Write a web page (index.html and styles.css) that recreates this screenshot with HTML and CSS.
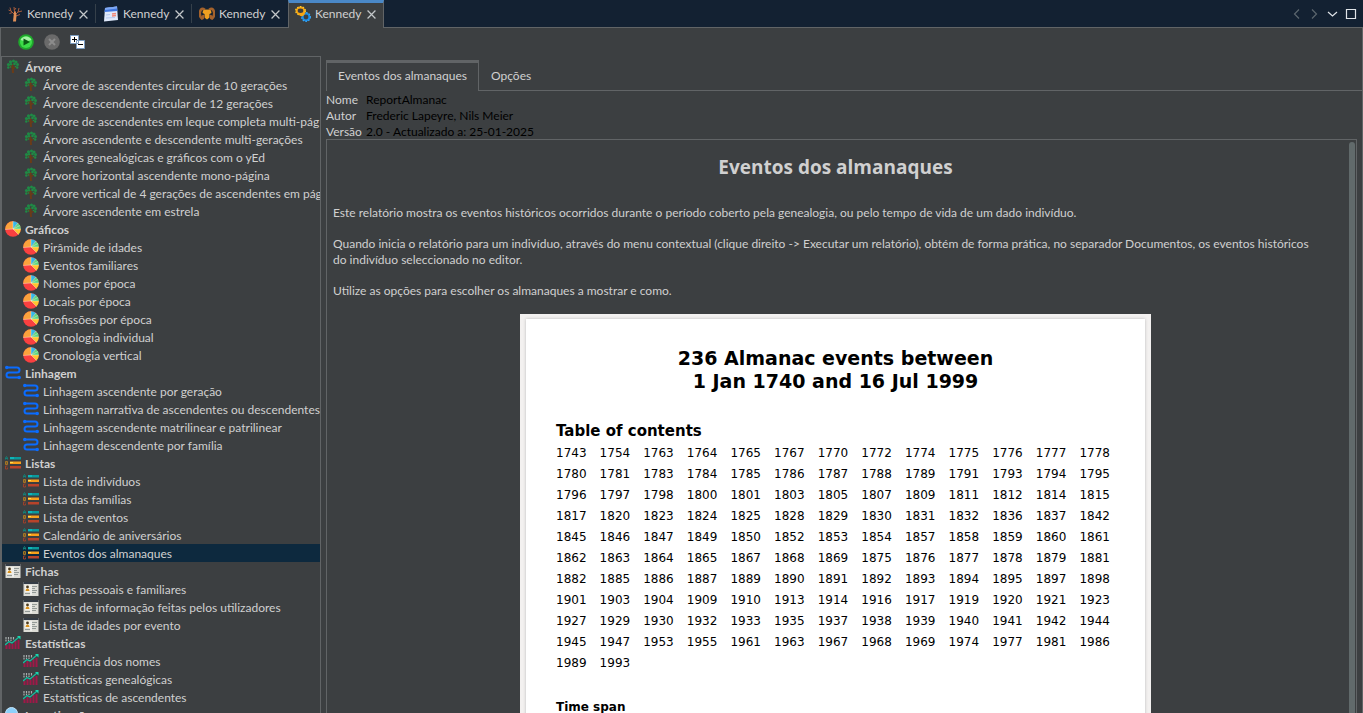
FILE: index.html
```html
<!DOCTYPE html>
<html lang="pt">
<head>
  <meta charset="UTF-8" />
  <meta name="viewport" content="width=device-width, initial-scale=1.0" />
  <title>Kennedy - Relatórios</title>
  <link rel="stylesheet" href="styles.css">
</head>
<body>

  <!-- Iconos reutilizados -->
  <svg class="sprite" aria-hidden="true">
    <symbol id="i-arvore" viewBox="0 0 16 16">
      <path d="M7.500 5 L8 14" stroke="#6a3c18" stroke-width="2" />
      <path d="M4.500 6.500 L7.500 9 M11.500 7 L8 10" stroke="#6a3c18" stroke-width="1.200" fill="none" />
      <g fill="#1f8a45">
        <circle cx="3.500" cy="5.500" r="1.600" /><circle cx="5.500" cy="2.800" r="1.600" />
        <circle cx="8.500" cy="2" r="1.500" /><circle cx="11" cy="3" r="1.600" />
        <circle cx="12.500" cy="5.500" r="1.500" /><circle cx="6" cy="5.200" r="1.200" />
        <circle cx="9.500" cy="5" r="1.300" /><circle cx="12.200" cy="8.500" r="1.200" />
        <circle cx="3.300" cy="8.500" r="1.200" /><circle cx="5.500" cy="8" r=".8" />
        <circle cx="10.500" cy="7.500" r=".8" />
      </g>
    </symbol>
    <symbol id="i-grafico" viewBox="0 0 16 16">
      <circle cx="8" cy="8" r="7.8" fill="#fa4040" />
      <path d="M8 8 L8 .2 A7.8 7.8 0 0 0 .2 8.500 Z" fill="#fba23c" />
      <path d="M8 8 L8 .2 A7.8 7.8 0 0 1 13 2 Z" fill="#35b8e8" />
      <path d="M8 8 L13 2 A7.8 7.8 0 0 1 15.800 8 Z" fill="#5cd480" />
      <path d="M8 8 L15.800 8 A7.800 7.800 0 0 1 13.500 13.500 Z" fill="#ffc62e" />
      <path d="M8 .2 V8 L.2 8.500 M8 8 L13 2 M8 8 H15.800 M8 8 L13.500 13.500 M8 8 L15 4.500" stroke="#fff" stroke-width=".5" stroke-opacity=".7" fill="none" />
    </symbol>
    <symbol id="i-linhagem" viewBox="0 0 16 16">
      <path d="M2 2.500 H12 Q14.500 2.500 14.500 5 T12 7.500 H4 Q1.500 7.500 1.500 10 T4 12.500 H14" fill="none" stroke="#0a6cff" stroke-width="2" />
      <circle cx="1.800" cy="2.500" r="1.800" fill="#0a6cff" />
      <circle cx="14.200" cy="12.500" r="1.800" fill="#0a6cff" />
    </symbol>
    <symbol id="i-lista" viewBox="0 0 16 16">
      <rect x="5" y="2" width="11" height="2.500" fill="#0b9a9c" />
      <rect x="5" y="6.500" width="11" height="2.500" fill="#f9a01b" />
      <rect x="5" y="11" width="11" height="2.500" fill="#b8432a" />
      <path d="M5 3 h4" stroke="#12d0d8" />
      <path d="M5 7.500 h3" stroke="#ffdc4c" />
      <path d="M.5 4.500 V3 L1.500 1.500 L2.500 3 V4.500 M.5 3.500 H2.500" fill="none" stroke="#138078" />
      <path d="M.5 6.500 h2 v3 h-2 z M.5 8 h2" fill="none" stroke="#b07c20" stroke-width=".9" />
      <path d="M2.500 11 h-2 v3 h2 v-1.500" fill="none" stroke="#9c402a" />
    </symbol>
    <symbol id="i-ficha" viewBox="0 0 16 16">
      <rect x=".5" y="1" width="15" height="14" fill="#dcdcd6" />
      <rect x=".5" y="1" width="15" height="2" fill="#343c46" />
      <rect x="2" y="4" width="5" height="7" fill="#f4f0e4" />
      <circle cx="4.500" cy="6" r="1.400" fill="#4a3a20" />
      <path d="M2.500 10 Q2.500 7.500 4.500 7.500 T6.500 10 Z" fill="#d8901c" />
      <path d="M2 12.500 H7 M9 5.500 H14 M9 7.500 H12 M9 9.500 H14 M9 11.500 H13" stroke="#8a9290" stroke-width=".9" />
      <path d="M8 4 V14" stroke="#fff" />
    </symbol>
    <symbol id="i-estatistica" viewBox="0 0 16 16">
      <path d="M1.500 14 V10 M4.500 14 V8 M7.500 14 V9 M10.500 14 V6 M13.500 14 V5" stroke="#a01848" stroke-width="2" />
      <path d="M1 2 V7 M3.500 2 V6 M6 2 V6 M8.500 2 V5" stroke="#a8aeae" stroke-width="1.200" stroke-dasharray="2 .5" />
      <path d="M0 10 L4 6.500 L7 8 L14 2" fill="none" stroke="#18b89c" stroke-width="1.400" />
      <path d="M12 1 H15.500 V4.500 Z" fill="#18d8b0" />
    </symbol>
    <symbol id="i-pesquisa" viewBox="0 0 16 16">
      <circle cx="6.500" cy="6.500" r="6" fill="#8ed0fa" stroke="#c4e4fa" />
      <path d="M11 11 L15 15" stroke="#c49040" stroke-width="2" />
    </symbol>
    <symbol id="i-fechar" viewBox="0 0 8 8">
      <path d="M.5 .5 L7.500 7.500 M7.500 .5 L.5 7.500" stroke="#c4c8ca" stroke-width="1.100" />
    </symbol>
  </svg>

  <header class="janelas">
    <nav class="abas">
      <div class="aba">
        <svg class="icone" viewBox="0 0 16 16">
          <path d="M7 8 L4 5 L3 1.500 M4 5 L1.500 4 M8 9 L11 6 L12 2 M11 6 L15 5 M9 10 L13 8.500 M7.500 6 L7 1 M7.500 4 L9 2 M5.500 6.500 L2.500 7.500" fill="none" stroke="#a85c3c" />
          <path d="M6 15.500 L7 6 L8.500 5 L9.500 9 L9 15.500 Z" fill="#e09058" />
        </svg>
        <a href="#">Kennedy</a>
        <button aria-label="Fechar"><svg><use href="#i-fechar" /></svg></button>
      </div>
      <div class="aba">
        <svg class="icone" viewBox="0 0 16 16">
          <path d="M2 2 L14 .5 L15 14 L1 15.500 Z" fill="#dfe9fb" />
          <path d="M2 2 L14 .5 L14.500 5 L1.500 6 Z" fill="#3f76e0" />
          <path d="M2 2 L14 .5 L14 2.500 L2 4 Z" fill="#7ea8f4" />
          <path d="M9 8 L13 7.500 M9 10 L13 9.500" stroke="#f08878" stroke-width="1.500" />
          <path d="M3 9 L7 8.500 M3 12 L12 11.500" stroke="#b4c8f0" />
        </svg>
        <a href="#">Kennedy</a>
        <button aria-label="Fechar"><svg><use href="#i-fechar" /></svg></button>
      </div>
      <div class="aba">
        <svg class="icone" viewBox="0 0 16 16">
          <path d="M6 4 Q2 1 1 6 Q0 10 3 12.500 Q5 12 4 9 M10 4 Q14 1 15 6 Q16 10 13 12.500 Q11 12 12 9" fill="none" stroke="#a4622c" stroke-width="2.600" />
          <path d="M4 4.500 Q8 2.500 12 4.500 L12.500 7 L10.500 8 L10 12 L8 13.500 L6 12 L5.500 8 L3.500 7 Z" fill="#f0a020" />
        </svg>
        <a href="#">Kennedy</a>
        <button aria-label="Fechar"><svg><use href="#i-fechar" /></svg></button>
      </div>
      <div class="aba ativa">
        <svg class="icone" viewBox="0 0 16 16">
          <ellipse cx="5.500" cy="4.800" rx="3.800" ry="3.200" fill="none" stroke="#f8a410" stroke-width="2" />
          <ellipse cx="5.500" cy="4.800" rx="4.900" ry="4.200" fill="none" stroke="#ffcc30" stroke-width="1.200" stroke-dasharray="1.500 1.400" />
          <ellipse cx="11" cy="11" rx="3.400" ry="3.400" fill="none" stroke="#1c8ce4" stroke-width="2" />
          <ellipse cx="11" cy="11" rx="4.400" ry="4.400" fill="none" stroke="#38a8f8" stroke-width="1.200" stroke-dasharray="1.500 1.400" />
          <path d="M4 8 Q8 11 9.500 6" fill="none" stroke="#f8a410" stroke-width="2" />
        </svg>
        <a href="#">Kennedy</a>
        <button aria-label="Fechar"><svg><use href="#i-fechar" /></svg></button>
      </div>
    </nav>
    <div class="controles">
      <button aria-label="Anterior" disabled><svg viewBox="0 0 12 12"><path d="M8 1.500 L3.500 6 L8 10.500" /></svg></button>
      <button aria-label="Seguinte" disabled><svg viewBox="0 0 12 12"><path d="M3 1.500 L7.500 6 L3 10.500" /></svg></button>
      <button aria-label="Lista de janelas"><svg viewBox="0 0 12 12"><path d="M1 4 L5.500 8 L10 4" /></svg></button>
      <button aria-label="Maximizar"><svg viewBox="0 0 12 12"><path d="M1.500 1.500 H10.500 V10.500 H1.500 Z" /></svg></button>
    </div>
  </header>

  <main>
    <div class="ferramentas">
      <button aria-label="Executar">
        <svg viewBox="0 0 16 16">
          <circle cx="8" cy="8" r="7.800" fill="#1fa82c" />
          <circle cx="8" cy="8" r="6" fill="#3cdc48" />
          <path d="M2.500 6 A6 6 0 0 1 13.500 6 Q8 8 2.500 6 Z" fill="#a4f4a4" />
          <path d="M5.500 4.500 L12 8 L5.500 11.500 Z" fill="#0a5c14" />
        </svg>
      </button>
      <button aria-label="Parar" disabled>
        <svg viewBox="0 0 16 16">
          <circle cx="8" cy="8" r="7.800" fill="#6a6a6a" />
          <path d="M5 5 L11 11 M11 5 L5 11" stroke="#8c8c8c" stroke-width="2" />
        </svg>
      </button>
      <button aria-label="Expandir ou recolher">
        <svg viewBox="0 0 16 16">
          <path d="M.5 1.500 H8.500 V9.500 H.5 Z M6.500 6.500 H14.500 V14.500 H6.500 Z" fill="#fff" stroke="#7c9cc0" />
          <path d="M2 5.500 H7 M4.500 3 V8 M8 10.500 H13" stroke="#000" />
        </svg>
      </button>
    </div>

    <div class="divisao">
      <nav class="arvore">
        <h2><svg><use href="#i-arvore" /></svg>Árvore</h2>
        <ul>
          <li><a href="#"><svg><use href="#i-arvore" /></svg>Árvore de ascendentes circular de 10 gerações</a></li>
          <li><a href="#"><svg><use href="#i-arvore" /></svg>Árvore descendente circular de 12 gerações</a></li>
          <li><a href="#"><svg><use href="#i-arvore" /></svg>Árvore de ascendentes em leque completa multi-pág</a></li>
          <li><a href="#"><svg><use href="#i-arvore" /></svg>Árvore ascendente e descendente multi-gerações</a></li>
          <li><a href="#"><svg><use href="#i-arvore" /></svg>Árvores genealógicas e gráficos com o yEd</a></li>
          <li><a href="#"><svg><use href="#i-arvore" /></svg>Árvore horizontal ascendente mono-página</a></li>
          <li><a href="#"><svg><use href="#i-arvore" /></svg>Árvore vertical de 4 gerações de ascendentes em pág</a></li>
          <li><a href="#"><svg><use href="#i-arvore" /></svg>Árvore ascendente em estrela</a></li>
        </ul>
        <h2><svg><use href="#i-grafico" /></svg>Gráficos</h2>
        <ul>
          <li><a href="#"><svg><use href="#i-grafico" /></svg>Pirâmide de idades</a></li>
          <li><a href="#"><svg><use href="#i-grafico" /></svg>Eventos familiares</a></li>
          <li><a href="#"><svg><use href="#i-grafico" /></svg>Nomes por época</a></li>
          <li><a href="#"><svg><use href="#i-grafico" /></svg>Locais por época</a></li>
          <li><a href="#"><svg><use href="#i-grafico" /></svg>Profissões por época</a></li>
          <li><a href="#"><svg><use href="#i-grafico" /></svg>Cronologia individual</a></li>
          <li><a href="#"><svg><use href="#i-grafico" /></svg>Cronologia vertical</a></li>
        </ul>
        <h2><svg><use href="#i-linhagem" /></svg>Linhagem</h2>
        <ul>
          <li><a href="#"><svg><use href="#i-linhagem" /></svg>Linhagem ascendente por geração</a></li>
          <li><a href="#"><svg><use href="#i-linhagem" /></svg>Linhagem narrativa de ascendentes ou descendentes</a></li>
          <li><a href="#"><svg><use href="#i-linhagem" /></svg>Linhagem ascendente matrilinear e patrilinear</a></li>
          <li><a href="#"><svg><use href="#i-linhagem" /></svg>Linhagem descendente por família</a></li>
        </ul>
        <h2><svg><use href="#i-lista" /></svg>Listas</h2>
        <ul>
          <li><a href="#"><svg><use href="#i-lista" /></svg>Lista de indivíduos</a></li>
          <li><a href="#"><svg><use href="#i-lista" /></svg>Lista das famílias</a></li>
          <li><a href="#"><svg><use href="#i-lista" /></svg>Lista de eventos</a></li>
          <li><a href="#"><svg><use href="#i-lista" /></svg>Calendário de aniversários</a></li>
          <li><a href="#" class="selecionado"><svg><use href="#i-lista" /></svg>Eventos dos almanaques</a></li>
        </ul>
        <h2><svg><use href="#i-ficha" /></svg>Fichas</h2>
        <ul>
          <li><a href="#"><svg><use href="#i-ficha" /></svg>Fichas pessoais e familiares</a></li>
          <li><a href="#"><svg><use href="#i-ficha" /></svg>Fichas de informação feitas pelos utilizadores</a></li>
          <li><a href="#"><svg><use href="#i-ficha" /></svg>Lista de idades por evento</a></li>
        </ul>
        <h2><svg><use href="#i-estatistica" /></svg>Estatísticas</h2>
        <ul>
          <li><a href="#"><svg><use href="#i-estatistica" /></svg>Frequência dos nomes</a></li>
          <li><a href="#"><svg><use href="#i-estatistica" /></svg>Estatísticas genealógicas</a></li>
          <li><a href="#"><svg><use href="#i-estatistica" /></svg>Estatísticas de ascendentes</a></li>
        </ul>
        <h2><svg><use href="#i-pesquisa" /></svg>Investigação</h2>
      </nav>

      <section class="detalhe">
        <div class="separadores">
          <button class="ativo">Eventos dos almanaques</button>
          <button>Opções</button>
        </div>
        <dl>
          <dt>Nome</dt><dd>ReportAlmanac</dd>
          <dt>Autor</dt><dd>Frederic Lapeyre, Nils Meier</dd>
          <dt>Versão</dt><dd>2.0 - Actualizado a: 25-01-2025</dd>
        </dl>

        <article class="descricao">
          <h1>Eventos dos almanaques</h1>
          <p>Este relatório mostra os eventos históricos ocorridos durante o período coberto pela genealogia, ou pelo tempo de vida de um dado indivíduo.</p>
          <p>Quando inicia o relatório para um indivíduo, através do menu contextual (clique direito -&gt; Executar um relatório), obtém de forma prática, no separador Documentos, os eventos históricos do indivíduo seleccionado no editor.</p>
          <p>Utilize as opções para escolher os almanaques a mostrar e como.</p>

          <div class="moldura">
            <div class="documento">
              <h2>236 Almanac events between<br>1 Jan 1740 and 16 Jul 1999</h2>
              <h3>Table of contents</h3>
              <div class="anos">
                <span>1743</span><span>1754</span><span>1763</span><span>1764</span><span>1765</span><span>1767</span><span>1770</span><span>1772</span><span>1774</span><span>1775</span><span>1776</span><span>1777</span><span>1778</span>
                <span>1780</span><span>1781</span><span>1783</span><span>1784</span><span>1785</span><span>1786</span><span>1787</span><span>1788</span><span>1789</span><span>1791</span><span>1793</span><span>1794</span><span>1795</span>
                <span>1796</span><span>1797</span><span>1798</span><span>1800</span><span>1801</span><span>1803</span><span>1805</span><span>1807</span><span>1809</span><span>1811</span><span>1812</span><span>1814</span><span>1815</span>
                <span>1817</span><span>1820</span><span>1823</span><span>1824</span><span>1825</span><span>1828</span><span>1829</span><span>1830</span><span>1831</span><span>1832</span><span>1836</span><span>1837</span><span>1842</span>
                <span>1845</span><span>1846</span><span>1847</span><span>1849</span><span>1850</span><span>1852</span><span>1853</span><span>1854</span><span>1857</span><span>1858</span><span>1859</span><span>1860</span><span>1861</span>
                <span>1862</span><span>1863</span><span>1864</span><span>1865</span><span>1867</span><span>1868</span><span>1869</span><span>1875</span><span>1876</span><span>1877</span><span>1878</span><span>1879</span><span>1881</span>
                <span>1882</span><span>1885</span><span>1886</span><span>1887</span><span>1889</span><span>1890</span><span>1891</span><span>1892</span><span>1893</span><span>1894</span><span>1895</span><span>1897</span><span>1898</span>
                <span>1901</span><span>1903</span><span>1904</span><span>1909</span><span>1910</span><span>1913</span><span>1914</span><span>1916</span><span>1917</span><span>1919</span><span>1920</span><span>1921</span><span>1923</span>
                <span>1927</span><span>1929</span><span>1930</span><span>1932</span><span>1933</span><span>1935</span><span>1937</span><span>1938</span><span>1939</span><span>1940</span><span>1941</span><span>1942</span><span>1944</span>
                <span>1945</span><span>1947</span><span>1953</span><span>1955</span><span>1961</span><span>1963</span><span>1967</span><span>1968</span><span>1969</span><span>1974</span><span>1977</span><span>1981</span><span>1986</span>
                <span>1989</span><span>1993</span>
              </div>
              <h4>Time span</h4>
            </div>
          </div>
          <div class="barra"></div>
        </article>
      </section>
    </div>
  </main>

</body>
</html>
```

FILE: styles.css
```css
* { margin: 0; padding: 0; box-sizing: border-box; }

body {
  display: flex;
  flex-direction: column;
  height: 100vh;
  overflow: hidden;
  font-family: Lato, sans-serif;
  font-size: 12px;
  line-height: 16px;
  color: #d0d0d0;
  background: #3c3f41;
}

a { color: inherit; text-decoration: none; }
button { font: inherit; color: inherit; background: none; border: none; }
svg { display: block; flex: none; width: 16px; height: 16px; }
.sprite { position: absolute; width: 0; height: 0; }

/* Barra de janelas */
.janelas {
  display: flex;
  justify-content: space-between;
  height: 28px;
  flex: none;
  background: #132132;
  box-shadow: inset 0 -1px #616466;
}

.abas { display: flex; }

.aba {
  display: flex;
  align-items: center;
  width: 96px;
  padding-left: 7px;
  background: linear-gradient(#35404a, #35404a) no-repeat right 4px / 1px 19px;
}
.aba .icone { margin-right: 4px; }
.aba a { flex: 1; }
.aba button { padding: 2px; margin-right: 6px; }
.aba button svg { width: 9px; height: 9px; }
.aba:nth-child(3) { background: none; }

.aba.ativa {
  padding-left: 6px;
  border: 1px solid #616466;
  border-top: 3px solid #4a88c7;
  border-bottom: none;
  background: #3c3f41;
}
.aba.ativa > * { margin-top: -3px; }
.aba.ativa button { margin-right: 5px; }

.controles {
  display: flex;
  align-items: center;
  gap: 6px;
  padding-right: 6px;
}
.controles svg { width: 12px; height: 12px; fill: none; stroke: #e0e4e8; stroke-width: 1.2; }
.controles button:disabled svg { stroke: #5c666e; }

main {
  flex: 1;
  min-height: 0;
  display: flex;
  flex-direction: column;
  border: solid #616466;
  border-width: 0 1px;
}

.ferramentas {
  display: flex;
  align-items: center;
  gap: 10px;
  height: 28px;
  padding-left: 17px;
  flex: none;
}

.divisao {
  flex: 1;
  min-height: 0;
  display: flex;
  gap: 5px;
}

/* Lista de relatórios */
.arvore {
  width: 320px;
  flex: none;
  padding-top: 1px;
  overflow: hidden;
  border: 1px solid #616466;
  border-bottom: none;
}
.arvore h2, .arvore a {
  display: flex;
  align-items: flex-start;
  gap: 4px;
  height: 18px;
  padding: 1px 0 0 3px;
  font-size: 12px;
  line-height: 18px;
  white-space: nowrap;
}
.arvore ul { list-style: none; }
.arvore a { padding-left: 21px; }
.arvore .selecionado { background: #0d293e; }

/* Painel do relatório */
.detalhe {
  flex: 1;
  min-width: 0;
  display: flex;
  flex-direction: column;
  padding-top: 4px;
}

.separadores {
  display: flex;
  height: 31px;
  flex: none;
  box-shadow: inset 0 -1px #616466;
}
.separadores button { padding: 0 12px; }
.separadores .ativo {
  padding: 0 11px 3px;
  border: 1px solid #616466;
  border-top-width: 3px;
  border-bottom: none;
  background: #3c3f41;
}

dl {
  display: grid;
  grid-template-columns: 40px 1fr;
  height: 48px;
  padding-top: 1px;
}
dd { color: #000; }

.descricao {
  position: relative;
  flex: 1;
  min-height: 0;
  overflow: hidden;
  margin-right: 5px;
  padding: 12px 18px 0 6px;
  border: 1px solid #616466;
  border-bottom: none;
}
.descricao h1 {
  margin-bottom: 23px;
  font-family: 'Open Sans', sans-serif;
  font-size: 19px;
  line-height: 30px;
  text-align: center;
}
.descricao p {
  margin-bottom: 15px;
  padding-right: 20px;
}

.barra {
  position: absolute;
  top: 2px;
  right: 1px;
  bottom: 0;
  width: 6px;
  border-radius: 3px 3px 0 0;
  background: #616a6b;
}

/* Exemplo do documento */
.moldura {
  width: 631px;
  margin: 0 auto;
  padding: 5px 6px 0;
  background: #f3f1f0;
}
.documento {
  height: 600px;
  padding: 28px 22px 0 30px;
  font-family: 'DejaVu Sans', sans-serif;
  color: #000;
  background: #fff;
  box-shadow: 0 0 3px #bbb;
}
.documento h2 {
  margin: 0 8px 26px 0;
  font-size: 19px;
  line-height: 23px;
  text-align: center;
}
.documento h3 {
  font-size: 15px;
  line-height: 24px;
}
.anos {
  display: grid;
  grid-template-columns: repeat(13, 1fr);
  line-height: 21px;
  margin-bottom: 23px;
}
.documento h4 { font-size: 12px; line-height: 20px; }
```
